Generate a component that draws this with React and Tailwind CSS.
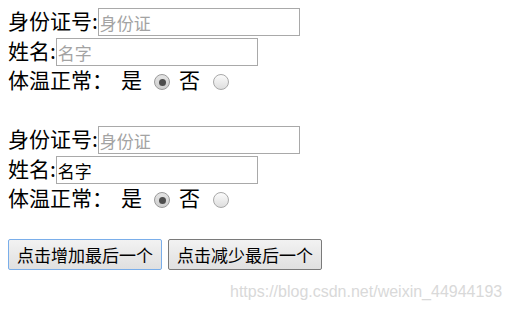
import { useState } from "react";

function Radio({ checked }) {
  return (
    <span
      className={
        "flex items-center justify-center w-[16px] h-[16px] rounded-full border " +
        (checked
          ? "border-[#9a9a9a] bg-gradient-to-b from-[#e4e4e4] to-[#cfcfcf]"
          : "border-[#a8a8a8] bg-gradient-to-b from-[#fbfbfb] to-[#dedede]")
      }
    >
      {checked && <span className="w-[7px] h-[7px] rounded-full bg-[#4d4d4d]" />}
    </span>
  );
}

function Person({ name }) {
  return (
    <div className="flex flex-col">
      {/* ID */}
      <div className="flex items-start h-[30px]">
        <span className="leading-[22px] mt-[1px]">身份证号:</span>
        <input
          placeholder="身份证"
          className="w-[202px] h-[28px] border border-[#a9a9a9] px-[1px] text-[17px] outline-none placeholder:text-[#a3a3a3]"
        />
      </div>

      {/* NAME */}
      <div className="flex items-start h-[30px]">
        <span className="leading-[22px] mt-[1px]">姓名:</span>
        <input
          placeholder="名字"
          defaultValue={name}
          className="w-[202px] h-[28px] border border-[#a9a9a9] px-[1px] text-[17px] text-black outline-none placeholder:text-[#a3a3a3]"
        />
      </div>

      {/* TEMPERATURE */}
      <div className="flex items-start h-[29px]">
        <span className="leading-[22px]">体温正常：</span>
        <span className="leading-[22px] ml-[8px]">是</span>
        <span className="flex ml-[12px] mt-[6px]">
          <Radio checked />
        </span>
        <span className="leading-[22px] ml-[9px]">否</span>
        <span className="flex ml-[13px] mt-[6px]">
          <Radio />
        </span>
      </div>
    </div>
  );
}

export default function App() {
  const [count] = useState(2);

  return (
    <div className="relative w-[511px] h-[309px] bg-white text-black text-[21px] font-['Noto_Sans_CJK_SC','Microsoft_YaHei',sans-serif]">
      <div className="flex flex-col pt-[8px] pl-[8px]">

        <Person name="" />

        <div className="h-[29px]" />

        <Person name="名字" />

        <div className="h-[24px]" />

        {/* BUTTONS */}
        <div className="flex gap-[6px]">
          <button className="w-[154px] h-[31px] border border-[#7aaeea] rounded-[2px] bg-gradient-to-b from-[#f2f2f2] to-[#e0e0e0] text-[17px] leading-none">
            点击增加最后一个
          </button>
          <button className="w-[154px] h-[31px] border border-[#7a7a7a] rounded-[2px] bg-gradient-to-b from-[#f2f2f2] to-[#e0e0e0] text-[17px] leading-none">
            点击减少最后一个
          </button>
        </div>

      </div>

      {/* watermark */}
      <div className="absolute left-[230px] top-[280px] text-[16px] text-[#d9d9d9] font-['Liberation_Sans',Arial,sans-serif] whitespace-nowrap">
        https://blog.csdn.net/weixin_44944193
      </div>

      {count > 2 && <div />}
    </div>
  );
}
